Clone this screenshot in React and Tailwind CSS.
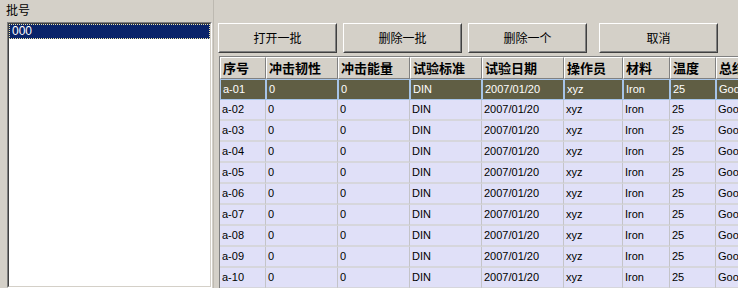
import React from "react";

const cols = [
  { t: "序号", w: "w-[46px]" },
  { t: "冲击韧性", w: "w-[72px]" },
  { t: "冲击能量", w: "w-[72px]" },
  { t: "试验标准", w: "w-[72px]" },
  { t: "试验日期", w: "w-[82px]" },
  { t: "操作员", w: "w-[59px]" },
  { t: "材料", w: "w-[47px]" },
  { t: "温度", w: "w-[46px]" },
  { t: "总结", w: "w-[80px]" },
];

const rows = Array.from({ length: 11 }, (_, i) => [
  `a-${String(i + 1).padStart(2, "0")}`,
  "0",
  "0",
  "DIN",
  "2007/01/20",
  "xyz",
  "Iron",
  "25",
  "Good",
]);

function Btn({ children, w, cls }) {
  return (
    <div
      className={`${w} ${cls} h-[30px] shrink-0 border border-t-white border-l-white border-r-[#404040] border-b-[#404040] bg-[#d4d0c8]`}
    >
      <div className="w-full h-full border border-t-[#d4d0c8] border-l-[#d4d0c8] border-r-[#808080] border-b-[#808080] flex items-center justify-center text-[12px] text-black font-['Noto_Sans_CJK_SC',sans-serif]">
        {children}
      </div>
    </div>
  );
}

export default function App() {
  return (
    <div className="w-[738px] h-[288px] bg-[#d4d0c8] overflow-hidden flex font-['Liberation_Sans',sans-serif]">
      {/* left */}
      <div className="w-[212px] shrink-0 pl-[7px] flex flex-col">
        <div className="h-[22px] pl-[-1px] -ml-[1px] pt-[3px] text-[12px] leading-[14px] text-black font-['Noto_Sans_CJK_SC',sans-serif]">
          批号
        </div>
        <div className="flex-1 border border-t-[#808080] border-l-[#808080] border-r-white border-b-white">
          <div className="h-full border border-t-[#404040] border-l-[#404040] border-r-[#d4d0c8] border-b-[#d4d0c8] bg-white">
            <div className="h-[15px] bg-[#0a246a] border border-dotted border-[#f0e6a8] text-white text-[12px] leading-[13px] pl-[2px]">
              000
            </div>
          </div>
        </div>
      </div>
      {/* splitter */}
      <div className="w-[6px] shrink-0 flex">
        <div className="ml-[1px] w-px h-full bg-[#bdb9b1]" />
      </div>
      {/* right */}
      <div className="flex-1 min-w-0 flex flex-col pt-[23px]">
        <div className="flex">
          <Btn w="w-[119px]" cls="">打开一批</Btn>
          <Btn w="w-[119px]" cls="ml-[6px]">删除一批</Btn>
          <Btn w="w-[119px]" cls="ml-[6px]">删除一个</Btn>
          <Btn w="w-[119px]" cls="ml-[12px]">取消</Btn>
        </div>
        <div className="mt-[3px] ml-[1px] border-t border-l border-[#808080] flex-1 overflow-hidden">
          <div className="w-[700px]">
            <div className="flex h-[22px]">
              {cols.map((c, i) => (
                <div
                  key={i}
                  className={`${c.w} shrink-0 border-t border-l border-t-white border-l-white border-r border-b border-r-[#808080] border-b-[#808080] bg-[#d4d0c8] pl-[2px] flex items-center text-[13px] font-bold text-black whitespace-nowrap overflow-hidden font-['Noto_Sans_CJK_SC',sans-serif]`}
                >
                  {c.t}
                </div>
              ))}
            </div>
            {rows.map((r, ri) => {
              const sel = ri === 0;
              return (
                <div key={ri} className="flex h-[21px]">
                  {r.map((v, ci) => (
                    <div
                      key={ci}
                      className={`${cols[ci].w} shrink-0 pl-[2px] flex items-center text-[11px] whitespace-nowrap overflow-hidden ${
                        sel
                          ? "bg-[#605e44] text-white border border-[#a6c4e8]"
                          : "bg-[#e0e0f8] text-black border-r border-b-2 border-r-[#c4c4c8] border-b-[#d6d6dc]"
                      }`}
                    >
                      {v}
                    </div>
                  ))}
                </div>
              );
            })}
          </div>
        </div>
      </div>
    </div>
  );
}
